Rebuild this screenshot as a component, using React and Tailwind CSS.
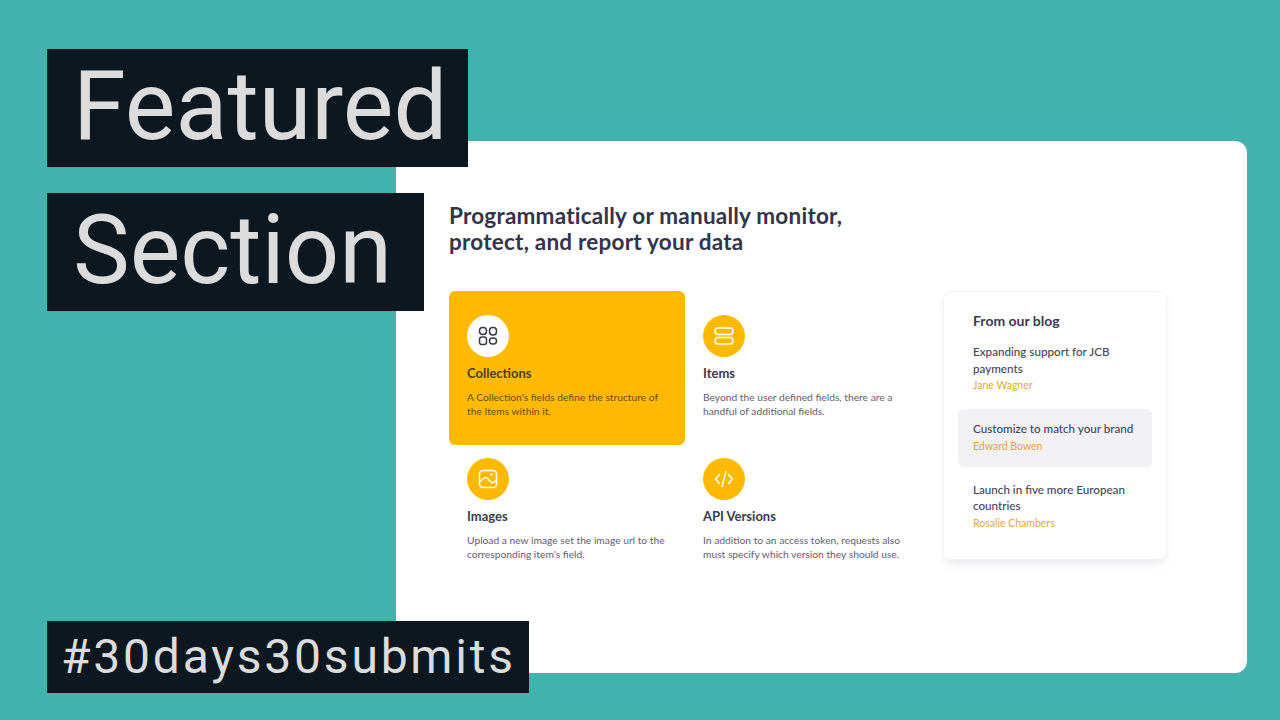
const features = [
  { title: 'Collections', text: ["A Collection's fields define the structure of", 'the Items within it.'], icon: 'grid', active: true },
  { title: 'Items', text: ['Beyond the user defined fields, there are a', 'handful of additional fields.'], icon: 'rows' },
  { title: 'Images', text: ['Upload a new image set the image url to the', "corresponding item's field."], icon: 'image' },
  { title: 'API Versions', text: ['In addition to an access token, requests also', 'must specify which version they should use.'], icon: 'code' },
];

const posts = [
  { title: ['Expanding support for JCB', 'payments'], author: 'Jane Wagner' },
  { title: ['Customize to match your brand'], author: 'Edward Bowen', active: true },
  { title: ['Launch in five more European', 'countries'], author: 'Rosalie Chambers' },
];

function FeatureIcon({ name, active }) {
  const cls = active ? 'text-[#3a3a4e]' : 'text-white';
  return (
    <div className={`flex h-[42px] w-[42px] items-center justify-center rounded-full ${active ? 'bg-white' : 'bg-[#ffba00]'}`}>
      <svg viewBox="0 0 20 20" fill="none" stroke="currentColor" strokeWidth="1.5" strokeLinecap="round" strokeLinejoin="round" className={`h-5 w-5 ${cls}`}>
        {name === 'grid' && (
          <>
            <rect x="1.5" y="1.5" width="7" height="7" rx="3.2" />
            <rect x="11.5" y="1.5" width="7" height="7.5" rx="3.2" />
            <rect x="1.5" y="11" width="7" height="7.5" rx="2.6" />
            <rect x="11.5" y="12" width="7" height="6" rx="3" />
          </>
        )}
        {name === 'rows' && (
          <>
            <rect x="1" y="2" width="18" height="6.5" rx="3.2" />
            <rect x="1" y="11.5" width="18" height="6.5" rx="3.2" />
          </>
        )}
        {name === 'image' && (
          <>
            <rect x="1.5" y="1.5" width="17" height="17" rx="3.5" />
            <path d="M1.5 13 L6 9 C7 8.2 8 8.2 9 9 L13.5 13.5 C14.5 14.3 15.5 14 18.5 11" />
            <circle cx="13.5" cy="5.5" r="0.6" />
          </>
        )}
        {name === 'code' && (
          <>
            <path d="M5.5 5.5 L1.5 10 L5.5 14.5" />
            <path d="M14.5 5.5 L18.5 10 L14.5 14.5" />
            <path d="M12 2.5 L8 17.5" />
          </>
        )}
      </svg>
    </div>
  );
}

function FeatureCard({ item, index }) {
  return (
    <div className={`px-[18px] ${index < 2 ? 'h-[154px] pt-6' : 'h-[130px] pt-[13px]'} ${item.active ? 'rounded-md bg-[#ffba00]' : ''}`}>
      <FeatureIcon name={item.icon} active={item.active} />
      <h3 className={`mt-[7px] text-[13px] font-bold leading-[18px] ${item.active ? 'text-[#4b3f1a]' : 'text-[#3a3a4e]'}`}>{item.title}</h3>
      <p className={`mt-[8px] whitespace-nowrap text-[10.25px] leading-[14px] ${item.active ? 'text-[#5f4f1a]' : 'text-[#60606f]'}`}>
        {item.text[0]}<br />{item.text[1]}
      </p>
    </div>
  );
}

function Label({ children, className }) {
  return (
    <div className={`absolute left-[47px] whitespace-nowrap bg-[#0d1720] text-[#dcdcdc] ${className}`} style={{ fontFamily: 'Roboto, sans-serif' }}>
      {children}
    </div>
  );
}

export default function App() {
  return (
    <div className="relative h-[720px] w-[1280px] overflow-hidden bg-[#42b3ac]">
      <div className="ml-[396px] pt-[141px]">
        <div className="h-[532px] w-[851px] rounded-r-xl bg-white pl-[53px] pt-[62px]" style={{ fontFamily: 'Lato, sans-serif' }}>
          <h2 className="whitespace-nowrap text-[22.5px] font-bold leading-[26px] tracking-[0.01em] text-[#33334a]">
            Programmatically or manually monitor,<br />protect, and report your data
          </h2>
          <div className="mt-[36px] flex">
            <div className="grid w-[472px] grid-cols-2">
              {features.map((item, i) => (
                <FeatureCard key={item.title} item={item} index={i} />
              ))}
            </div>
            <div className="ml-[22px] h-[269px] w-[224px] rounded-lg border border-[#f3f3f6] px-[14px] pt-[19px] shadow-[0_6px_10px_-2px_rgba(60,60,90,0.10)]">
              <h3 className="px-[15px] text-[14px] font-bold leading-[20px] text-[#3a3a4e]">From our blog</h3>
              <div className="mt-[1px]">
                {posts.map((post) => (
                  <div key={post.author} className={`mb-[3px] rounded-md px-[15px] pb-[13px] pt-[12px] ${post.active ? 'bg-[#f1f1f6]' : ''}`}>
                    <p className="whitespace-nowrap text-[11.65px] font-medium leading-[16.5px] text-[#45455a]">
                      {post.title.map((line) => (
                        <span key={line} className="block">{line}</span>
                      ))}
                    </p>
                    <p className="text-[10.5px] leading-[16px] text-[#dfa93a]">{post.author}</p>
                  </div>
                ))}
              </div>
            </div>
          </div>
        </div>
      </div>

      <Label className="top-[49px] h-[118px] w-[421px] pl-[26px] text-[95.5px] leading-[114px]">Featured</Label>
      <Label className="top-[193px] h-[118px] w-[377px] pl-[26px] text-[95.5px] leading-[114px]">Section</Label>
      <Label className="top-[621px] h-[72px] w-[482px] pl-[14px] text-[48px] leading-[72px] tracking-[0.058em]">#30days30submits</Label>
    </div>
  );
}
